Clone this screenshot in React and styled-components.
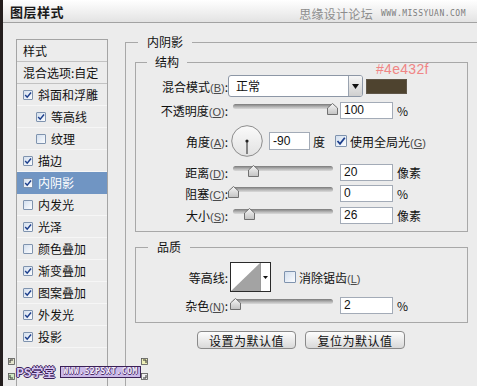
import React from "react";
import styled, { createGlobalStyle } from "styled-components";

const Global = createGlobalStyle`
  body { margin: 0; background: #ececec; }
  * { box-sizing: border-box; }
`;

const Page = styled.div`
  position: relative;
  width: 477px;
  height: 386px;
  overflow: hidden;
  background: #ececec;
  border-left: 3px solid #241e1e;
  display: flex;
  flex-direction: column;
  font-family: "Noto Sans CJK SC", "Liberation Sans", sans-serif;
  font-size: 12px;
  color: #111;
`;

const TitleBar = styled.div`
  height: 23px;
  flex-shrink: 0;
  display: flex;
  align-items: center;
  justify-content: space-between;
  padding: 0 11px 0 7px;
  background: linear-gradient(#ffffff, #e3e3e3);
  border-bottom: 1px solid #a2a2a2;
`;

const Title = styled.div`
  font-size: 13px;
  font-weight: bold;
  color: #1a1a1a;
  letter-spacing: 0.5px;
`;

const SiteMark = styled.div`
  display: flex;
  align-items: center;
  gap: 8px;
  margin-top: 4px;
  color: #8d8d8d;
`;

const SiteName = styled.span`
  font-size: 12px;
  letter-spacing: 0.3px;
`;

const SiteUrl = styled.span`
  font-family: "DejaVu Sans Mono", monospace;
  font-size: 8px;
  letter-spacing: 0.5px;
  color: #7c7c7c;
`;

const Body = styled.div`
  flex: 1;
  display: flex;
  align-items: flex-start;
  padding-left: 13px;
`;

const StyleList = styled.div`
  width: 92px;
  height: 380px;
  margin-top: 16px;
  flex-shrink: 0;
  border: 1px solid #a4a4a4;
`;

const ListHead = styled.div`
  height: 22px;
  display: flex;
  align-items: center;
  padding-left: 6px;
  border-bottom: 1px solid #c2c2c2;
  white-space: nowrap;
`;

const ListItem = styled.div`
  height: 22px;
  display: flex;
  align-items: center;
  gap: 5px;
  padding-left: ${(p) => (p.$indent ? 19 : 6)}px;
  border-bottom: 1px solid ${(p) => (p.$active ? "#7095c3" : "#f6f6f6")};
  background: ${(p) => (p.$active ? "#7095c3" : "transparent")};
  color: ${(p) => (p.$active ? "#fff" : "#111")};
  white-space: nowrap;
`;

const Box = styled.span`
  position: relative;
  width: ${(p) => p.$size}px;
  height: ${(p) => p.$size}px;
  flex-shrink: 0;
  border: 1px solid #7f93ae;
  border-radius: 1px;
  background: linear-gradient(135deg, #d3dfee, #fbfcfe);
  display: flex;
  align-items: center;
  justify-content: center;
`;

const Check = ({ on, size = 10 }) => (
  <Box $size={size}>
    {on && (
      <svg width={size - 2} height={size - 2} viewBox="0 0 10 10">
        <path d="M1.5 5 L4 7.8 L8.8 1.8" fill="none" stroke="#1d3f8c" strokeWidth="1.8" />
      </svg>
    )}
  </Box>
);

const Right = styled.div`
  margin-left: 17px;
  margin-top: 12px;
`;

const Outer = styled.fieldset`
  width: 370px;
  min-height: 420px;
  margin: 0;
  padding: 0;
  border: 1px solid #a8a8a8;
`;

const Legend = styled.legend`
  margin-left: ${(p) => p.$ml}px;
  padding: 0 ${(p) => p.$pad}px;
  font-size: 12px;
  line-height: 14px;
  color: #111;
`;

const Group = styled.fieldset`
  width: 333px;
  margin: ${(p) => p.$mt}px 0 0 9px;
  padding: ${(p) => p.$pt}px 0 ${(p) => p.$pb}px 0;
  border: 1px solid #a8a8a8;
`;

const Row = styled.div`
  position: relative;
  display: flex;
  align-items: center;
  height: ${(p) => p.$h}px;
  margin-top: ${(p) => p.$mt || 0}px;
`;

const Label = styled.div`
  width: 92px;
  flex-shrink: 0;
  text-align: right;
  white-space: nowrap;
`;

const Key = styled.span`
  font-family: "Liberation Sans", sans-serif;
  font-size: 11px;
  color: #4a4a4a;
  & u { text-decoration-color: #4a4a4a; }
`;

const Lbl = ({ text, k }) => (
  <>
    {text}
    {k && (
      <Key>
        (<u>{k}</u>)
      </Key>
    )}
  </>
);

const Select = styled.div`
  width: 135px;
  height: 22px;
  display: flex;
  border: 1px solid #8d97a6;
  border-radius: 3px;
  background: #fff;
  overflow: hidden;
`;

const SelectText = styled.div`
  flex: 1;
  padding-left: 7px;
  line-height: 20px;
`;

const SelectBtn = styled.div`
  width: 14px;
  border-left: 1px solid #9aa3b0;
  background: linear-gradient(#f6f6f6, #cfcfcf);
  display: flex;
  align-items: center;
  justify-content: center;
`;

const Swatch = styled.div`
  position: relative;
  width: 41px;
  height: 15px;
  margin-left: 3px;
  background: #4e432f;
  border: 1px solid #5f5648;
`;

const HexNote = styled.span`
  position: absolute;
  left: 9px;
  top: -19px;
  font-family: "Liberation Sans", sans-serif;
  font-size: 14px;
  color: #f08585;
  letter-spacing: 0.3px;
`;

const SliderWrap = styled.div`
  position: relative;
  width: 100px;
  height: 14px;
  margin-left: 5px;
`;

const Track = styled.div`
  position: absolute;
  left: 0;
  right: 0;
  top: 1px;
  height: 5px;
  border-radius: 3px;
  background: linear-gradient(#7a7a7a, #b9b9b9 60%, #dadada);
`;

const Thumb = styled.svg`
  position: absolute;
  top: 0;
  margin-left: -5.5px;
`;

const Slider = ({ at }) => (
  <SliderWrap>
    <Track />
    <Thumb width="11" height="12" viewBox="0 0 11 12" style={{ left: `${at * 100}%` }}>
      <defs>
        <linearGradient id="tg" x1="0" y1="0" x2="0" y2="1">
          <stop offset="0" stopColor="#f6f6f6" />
          <stop offset="1" stopColor="#c2c2c2" />
        </linearGradient>
      </defs>
      <polygon points="5.5,0.5 10.5,5 10.5,11.5 0.5,11.5 0.5,5" fill="url(#tg)" stroke="#707070" />
    </Thumb>
  </SliderWrap>
);

const Field = styled.div`
  width: ${(p) => p.$w || 53}px;
  height: ${(p) => p.$h || 17}px;
  margin-left: ${(p) => p.$ml ?? 7}px;
  padding-left: 3px;
  border: 1px solid #a3abb7;
  background: #fff;
  font-family: "Liberation Sans", sans-serif;
  font-size: 12px;
  display: flex;
  align-items: center;
`;

const Unit = styled.span`
  margin-left: ${(p) => p.$ml ?? 4}px;
  font-family: "Noto Sans CJK SC", "Liberation Sans", sans-serif;
  white-space: nowrap;
`;

const Dial = () => (
  <svg width="32" height="32" viewBox="0 0 32 32" style={{ marginLeft: 3, flexShrink: 0 }}>
    <defs>
      <linearGradient id="dg" x1="0" y1="0" x2="0" y2="1">
        <stop offset="0" stopColor="#fafafa" />
        <stop offset="1" stopColor="#e2e2e2" />
      </linearGradient>
    </defs>
    <circle cx="16" cy="16" r="15.3" fill="url(#dg)" stroke="#8c8c8c" />
    <line x1="16" y1="16" x2="16" y2="29" stroke="#5a5a5a" strokeWidth="1.4" />
    <circle cx="16" cy="16" r="1.6" fill="#222" />
  </svg>
);

const ContourBox = styled.div`
  width: 41px;
  height: 30px;
  margin-left: 2px;
  display: flex;
  border: 1px solid #2a2a2a;
  background: #fff;
`;

const ContourDrop = styled.div`
  flex: 1;
  border-left: 1px solid #9a9a9a;
  display: flex;
  align-items: center;
  justify-content: center;
`;

const Buttons = styled.div`
  display: flex;
  gap: 9px;
  margin: 8px 0 0 71px;
`;

const Button = styled.div`
  width: ${(p) => p.$w}px;
  height: 18px;
  border: 1px solid #8a8a8a;
  border-radius: 4px;
  background: linear-gradient(#fdfdfd, #d9d9d9);
  display: flex;
  align-items: center;
  justify-content: center;
  font-size: 12px;
  letter-spacing: 0.5px;
  color: #111;
`;

const Stamp = styled.div`
  position: absolute;
  left: 13px;
  top: 363px;
  display: flex;
  align-items: center;
  gap: 5px;
`;

const StampName = styled.span`
  font-size: 12px;
  font-weight: bold;
  color: #d9c9f4;
  text-shadow: 1px 0 #3b2157, -1px 0 #3b2157, 0 1px #3b2157, 0 -1px #3b2157;
`;

const StampUrl = styled.span`
  padding: 0 2px;
  border: 1px solid #3b2157;
  background: #cbb9e8;
  font-family: "DejaVu Sans Mono", monospace;
  font-size: 8px;
  font-weight: bold;
  line-height: 10px;
  color: #f4eefc;
  text-shadow: 1px 0 #4a2c6a, 0 1px #4a2c6a;
  letter-spacing: 0.5px;
`;

const Corner = styled.svg`
  position: absolute;
  left: ${(p) => p.$x}px;
  top: ${(p) => p.$y}px;
`;

const Mark = ({ x, y, color, d }) => (
  <Corner $x={x} $y={y} width="7" height="7" viewBox="0 0 7 7">
    <rect x="0.5" y="0.5" width="6" height="6" fill={color} stroke="#555" strokeWidth="0.8" />
    <path d={d} fill="none" stroke="#333" strokeWidth="1" />
  </Corner>
);

const items = [
  { name: "斜面和浮雕", on: true },
  { name: "等高线", on: true, indent: true },
  { name: "纹理", on: false, indent: true },
  { name: "描边", on: true },
  { name: "内阴影", on: true, active: true },
  { name: "内发光", on: false },
  { name: "光泽", on: true },
  { name: "颜色叠加", on: false },
  { name: "渐变叠加", on: true },
  { name: "图案叠加", on: true },
  { name: "外发光", on: true },
  { name: "投影", on: true },
];

export default function App() {
  return (
    <Page>
      <Global />
      <TitleBar>
        <Title>图层样式</Title>
        <SiteMark>
          <SiteName>思缘设计论坛</SiteName>
          <SiteUrl>WWW.MISSYUAN.COM</SiteUrl>
        </SiteMark>
      </TitleBar>
      <Body>
        <StyleList>
          <ListHead>样式</ListHead>
          <ListHead>混合选项:自定</ListHead>
          {items.map((it) => (
            <ListItem key={it.name} $indent={it.indent} $active={it.active}>
              <Check on={it.on} />
              {it.name}
            </ListItem>
          ))}
        </StyleList>
        <Right>
          <Outer>
            <Legend $ml={12} $pad={9}>内阴影</Legend>
            <Group $mt={6} $pt={6} $pb={6}>
              <Legend $ml={11} $pad={8}>结构</Legend>
              <Row $h={22}>
                <Label><Lbl text="混合模式" k="B" />:</Label>
                <Select>
                  <SelectText>正常</SelectText>
                  <SelectBtn>
                    <svg width="7" height="5" viewBox="0 0 7 5">
                      <polygon points="0,0 7,0 3.5,5" fill="#111" />
                    </svg>
                  </SelectBtn>
                </Select>
                <Swatch>
                  <HexNote>#4e432f</HexNote>
                </Swatch>
              </Row>
              <Row $h={20} $mt={3}>
                <Label><Lbl text="不透明度" k="O" />:</Label>
                <Slider at={0.99} />
                <Field>100</Field>
                <Unit>%</Unit>
              </Row>
              <Row $h={32} $mt={5}>
                <Label><Lbl text="角度" k="A" />:</Label>
                <Dial />
                <Field $w={41} $h={18} $ml={6}>-90</Field>
                <Unit $ml={3}>度</Unit>
                <span style={{ marginLeft: 10 }}>
                  <Check on size={12} />
                </span>
                <Unit $ml={3}>
                  <Lbl text="使用全局光" k="G" />
                </Unit>
              </Row>
              <Row $h={20} $mt={5}>
                <Label><Lbl text="距离" k="D" />:</Label>
                <Slider at={0.2} />
                <Field>20</Field>
                <Unit>像素</Unit>
              </Row>
              <Row $h={20} $mt={1}>
                <Label><Lbl text="阻塞" k="C" />:</Label>
                <Slider at={0} />
                <Field>0</Field>
                <Unit>%</Unit>
              </Row>
              <Row $h={20} $mt={2}>
                <Label><Lbl text="大小" k="S" />:</Label>
                <Slider at={0.165} />
                <Field>26</Field>
                <Unit>像素</Unit>
              </Row>
            </Group>
            <Group $mt={8} $pt={8} $pb={7}>
              <Legend $ml={12} $pad={9}>品质</Legend>
              <Row $h={30}>
                <Label>等高线:</Label>
                <ContourBox>
                  <svg width="29" height="28" viewBox="0 0 29 28">
                    <polygon points="29,0 29,28 0,28" fill="#a3a3a3" />
                  </svg>
                  <ContourDrop>
                    <svg width="5" height="3" viewBox="0 0 5 3">
                      <polygon points="0,0 5,0 2.5,3" fill="#111" />
                    </svg>
                  </ContourDrop>
                </ContourBox>
                <span style={{ marginLeft: 13 }}>
                  <Check size={12} />
                </span>
                <Unit $ml={3}>
                  <Lbl text="消除锯齿" k="L" />
                </Unit>
              </Row>
              <Row $h={20} $mt={3}>
                <Label><Lbl text="杂色" k="N" />:</Label>
                <Slider at={0.02} />
                <Field>2</Field>
                <Unit>%</Unit>
              </Row>
            </Group>
            <Buttons>
              <Button $w={99}>设置为默认值</Button>
              <Button $w={100}>复位为默认值</Button>
            </Buttons>
          </Outer>
        </Right>
      </Body>
      <Stamp>
        <StampName>PS学堂</StampName>
        <StampUrl>WWW.52PSXT.COM</StampUrl>
      </Stamp>
      <Mark x={5} y={358} color="#e6e6cf" d="M2 5 V2 H5" />
      <Mark x={5} y={373} color="#cfe8c2" d="M2 2 V5 H5" />
      <Mark x={138} y={358} color="#eef0b8" d="M2 2 H5 V5" />
      <Mark x={138} y={373} color="#efefef" d="M5 2 V5 H2" />
    </Page>
  );
}
